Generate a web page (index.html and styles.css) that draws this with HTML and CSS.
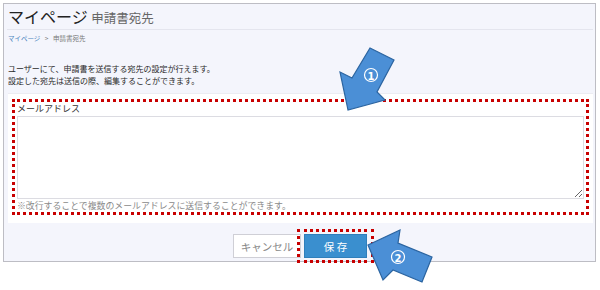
FILE: index.html
```html
<!DOCTYPE html>
<html lang="ja">
<head>
  <meta charset="UTF-8" />
  <title>マイページ 申請書宛先</title>
  <link rel="stylesheet" href="styles.css">
</head>
<body>
  <div class="frame">
    <div class="head">
      <h1>マイページ <span class="sub">申請書宛先</span></h1>
    </div>

    <div class="crumb">
      <a href="#">マイページ</a>
      <span class="sep">&gt;</span>
      <span>申請書宛先</span>
    </div>

    <p class="lead">
      ユーザーにて、申請書を送信する宛先の設定が行えます。<br />
      設定した宛先は送信の際、編集することができます。
    </p>

    <div class="card">
      <div class="mark">
        <label for="mail">メールアドレス</label>
        <textarea id="mail"></textarea>
        <div class="help">※改行することで複数のメールアドレスに送信することができます。</div>
      </div>
    </div>

    <div class="actions">
      <button class="btn cancel">キャンセル</button>
      <span class="mark-btn"><button class="btn save">保 存</button></span>
    </div>

    <!-- callout arrows -->
    <svg class="arrows" width="600" height="290" viewBox="0 0 600 290">
      <polygon class="arrow" points="348,110 340,72 352,78 370,48 394,60 377,92 385,100" />
      <circle class="num-bg" cx="371" cy="75" r="6.5" />
      <text class="num" x="371" y="79.5">1</text>

      <polygon class="arrow" points="368,245 400,230 398,243 432,257 422,282 393,270 383,280" />
      <circle class="num-bg" cx="398" cy="257" r="6.5" />
      <text class="num" x="398" y="261.5">2</text>
    </svg>
  </div>
</body>
</html>
```

FILE: styles.css
```css
:root {
  --bg: #f4f5fc;
  --line: #e4e5ee;
  --mark: #c80000;
  --blue: #3a8fcf;
  --text: #333;
}

body {
  margin: 0;
  background: #fff;
  font-family: "Noto Sans CJK JP", "Noto Sans", sans-serif;
  color: var(--text);
  width: 600px;
  height: 290px;
  overflow: hidden;
}

.frame {
  position: relative;
  margin: 3px 0 0 3px;
  width: 593px;
  height: 259px;
  border: 1px solid #bdbdc4;
  background: var(--bg);
  box-sizing: border-box;
}

.head {
  margin: 0 2px 0 3px;
  padding: 2px 0 0 1px;
  height: 23px;
  border-bottom: 1px solid var(--line);
}

h1 {
  margin: 0;
  font-size: 16px;
  font-weight: normal;
  line-height: 20px;
  color: #222;
}

h1 .sub {
  font-size: 12.5px;
  color: #666;
}

.crumb {
  margin: 3px 0 0 4px;
  font-size: 6.5px;
  line-height: 10px;
  color: #777;
}

.crumb a {
  color: #4d86c0;
  text-decoration: none;
}

.crumb .sep {
  margin: 0 3px;
}

.lead {
  margin: 20px 0 0 4px;
  font-size: 8px;
  line-height: 12px;
  color: #2a2a2a;
}

.card {
  margin: 6px 2px 0 4px;
  padding: 5px 4px 8px 4px;
  background: #fff;
  border-top: 1px solid #ececf2;
}

.mark {
  border: 3px dotted var(--mark);
  padding: 0 2px 0 2px;
}

.mark label {
  display: block;
  font-size: 9px;
  line-height: 13px;
  color: #333;
}

.mark textarea {
  display: block;
  width: 100%;
  height: 83px;
  margin: 1px 0 0 0;
  box-sizing: border-box;
  border: 1px solid #dcdce2;
  resize: vertical;
}

.help {
  font-size: 8.9px;
  line-height: 13px;
  color: #8a8a8a;
}

.actions {
  display: flex;
  justify-content: center;
  align-items: center;
  margin-top: 6px;
  padding-left: 8px;
}

.btn {
  font-family: inherit;
  font-size: 10.5px;
  height: 24px;
  padding: 0;
  border-radius: 0;
  cursor: pointer;
}

.cancel {
  width: 68px;
  background: #fff;
  color: #888;
  border: 1px solid #cfcfd6;
}

.mark-btn {
  display: inline-block;
  border: 3px dotted var(--mark);
  padding: 2px 4px;
  margin-left: -4px;
}

.save {
  display: block;
  width: 63px;
  background: var(--blue);
  color: #fff;
  border: 1px solid #2f7fbb;
}

.arrows {
  position: absolute;
  left: -4px;
  top: -4px;
  pointer-events: none;
}

.arrow {
  fill: #4b8fd6;
  stroke: #2b64a0;
  stroke-width: 1.2;
  stroke-linejoin: miter;
}

.num-bg {
  fill: #4b8fd6;
  stroke: #fff;
  stroke-width: 1.2;
}

.num {
  fill: #fff;
  font-family: "DejaVu Sans", sans-serif;
  font-size: 10px;
  font-weight: bold;
  text-anchor: middle;
}
```
